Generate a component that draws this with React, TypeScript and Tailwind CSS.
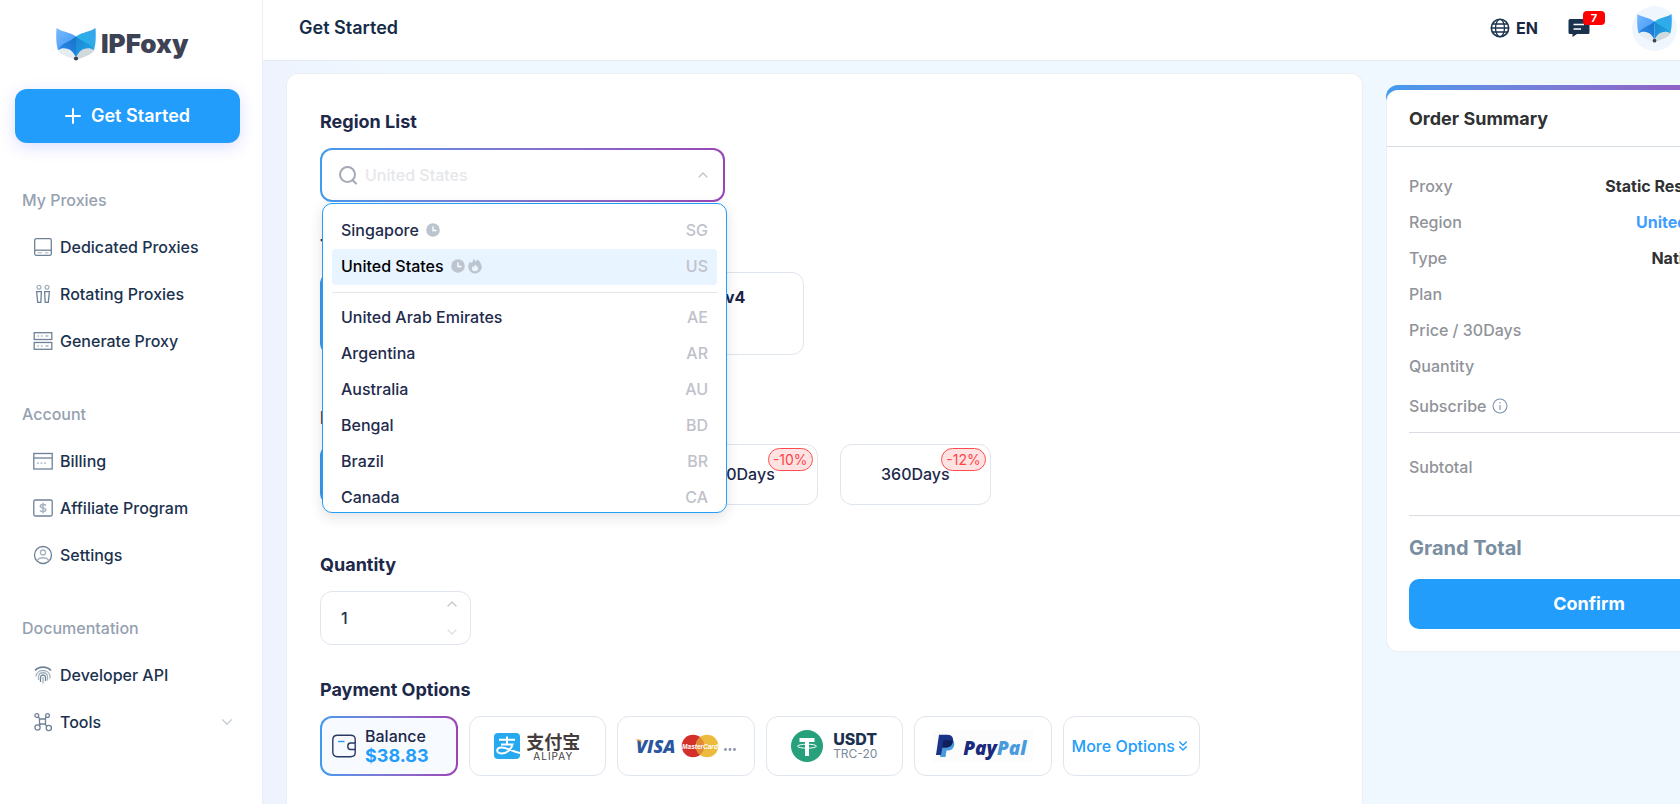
import { useState } from "react";
import type { ReactNode } from "react";
import { ChevronDown, ChevronUp, ChevronsDown } from "lucide-react";

const regions = [
  { name: 'United Arab Emirates', code: 'AE' },
  { name: 'Argentina', code: 'AR' },
  { name: 'Australia', code: 'AU' },
  { name: 'Bengal', code: 'BD' },
  { name: 'Brazil', code: 'BR' },
  { name: 'Canada', code: 'CA' },
]

const plans = [
  { name: '30Days', off: '' },
  { name: '90Days', off: '' },
  { name: '180Days', off: '-10%' },
  { name: '360Days', off: '-12%' },
]

const summary = [
  { label: 'Proxy', value: 'Static Residential', color: 'text-[#303133]' },
  { label: 'Region', value: 'United States', color: 'text-[#409eff]' },
  { label: 'Type', value: 'Native IPv4', color: 'text-[#303133]' },
  { label: 'Plan', value: '', color: '' },
  { label: 'Price / 30Days', value: '', color: '' },
  { label: 'Quantity', value: '', color: '' },
]

function FoxLogo({ className }: { className: string }) {
  return (
    <svg viewBox="0 0 40 34" className={className} aria-hidden="true">
      <defs>
        <linearGradient id="earLeft" x1="0" y1="0" x2="1" y2="1">
          <stop offset="0" stopColor="#7ab8ff" />
          <stop offset="1" stopColor="#3c97f2" />
        </linearGradient>
        <linearGradient id="earRight" x1="1" y1="0" x2="0" y2="1">
          <stop offset="0" stopColor="#3aa2ee" />
          <stop offset="1" stopColor="#1fb9e2" />
        </linearGradient>
        <linearGradient id="faceLeft" x1="0" y1="1" x2="1" y2="0">
          <stop offset="0" stopColor="#2f8ff0" />
          <stop offset="1" stopColor="#1672c8" />
        </linearGradient>
        <linearGradient id="faceRight" x1="0" y1="0" x2="1" y2="1">
          <stop offset="0" stopColor="#1a86d2" />
          <stop offset="1" stopColor="#22a8ea" />
        </linearGradient>
      </defs>
      <path d="M1.500 22C2 27 12 30 20 33C20 27 16 20 9 20Z" fill="#e4edf2" />
      <path d="M38.500 22C38 27 28 30 20 33C20 27 24 20 31 20Z" fill="#d0d9dc" />
      <path d="M0.500 1C6 5 14 5 20 9.500V12L2 23C0 17 0 8 0.500 1Z" fill="url(#earLeft)" />
      <path d="M39.500 1C34 5 26 5 20 9.500V12L38 23C40 17 40 8 39.500 1Z" fill="url(#earRight)" />
      <path d="M20 9.500C14 15 5 16 2 23C5 21 9 21 12 22C16 23 18 27 20 30Z" fill="url(#faceLeft)" />
      <path d="M20 9.500C26 15 35 16 38 23C35 21 31 21 28 22C24 23 22 27 20 30Z" fill="url(#faceRight)" />
      <circle cx="20" cy="31.500" r="2.100" fill="#3d4254" />
    </svg>
  )
}

function MenuIcon({ children }: { children: ReactNode }) {
  return (
    <svg viewBox="0 0 20 20" className="w-5 h-5 shrink-0" fill="none" stroke="#6f8196" strokeWidth="1.300" aria-hidden="true">
      {children}
    </svg>
  )
}

const menu = [
  {
    title: 'My Proxies',
    items: [
      {
        name: 'Dedicated Proxies',
        icon: <MenuIcon><rect x="1.700" y="1.700" width="16.600" height="16.600" rx="1.500" /><path d="M1.700 13.200H18.300" /><path d="M4.500 15.800H9M12 15.800H15.500" strokeWidth="1" stroke="#a6b2bf" /></MenuIcon>
      },
      {
        name: 'Rotating Proxies',
        icon: <MenuIcon><circle cx="6" cy="3.300" r="1.900" stroke="#a6b2bf" /><circle cx="14" cy="3.300" r="1.900" stroke="#a6b2bf" /><path d="M3.600 7.700H8.400L7.800 18.300H4.700ZM11.600 7.700H16.400L15.300 18.300H12.200Z" /></MenuIcon>
      },
      {
        name: 'Generate Proxy',
        icon: <MenuIcon><rect x="1.200" y="1.700" width="17.600" height="6.800" /><rect x="1.200" y="11.500" width="17.600" height="6.800" /><path d="M4.500 5H6M8 5H9.500M12.500 5H15.500M4.500 15H6M8 15H9.500M12.500 15H15.500" stroke="#a6b2bf" /></MenuIcon>
      },
    ]
  },
  {
    title: 'Account',
    items: [
      {
        name: 'Billing',
        icon: <MenuIcon><rect x="0.800" y="2.500" width="18.400" height="15.500" /><path d="M0.800 7H19.200" /><path d="M4 12.200H6M7.500 12.200H9.500M11 12.200H13" stroke="#a6b2bf" /></MenuIcon>
      },
      {
        name: 'Affiliate Program',
        icon: <MenuIcon><rect x="0.800" y="2" width="18.400" height="16" rx="1.500" /><path d="M13 7.500C12 6 7.300 6 7.300 8.300C7.300 10.700 12.900 9.300 12.900 11.800C12.900 14.200 8 14 7 12.400M10 4.800V15.200" strokeWidth="1.500" stroke="#a6b2bf" /></MenuIcon>
      },
      {
        name: 'Settings',
        icon: <MenuIcon><circle cx="10" cy="10" r="8.500" /><circle cx="10" cy="7.500" r="2.500" stroke="#a6b2bf" /><path d="M4.500 15.500C6 11.800 14 11.800 15.500 15.500" stroke="#a6b2bf" /></MenuIcon>
      },
    ]
  },
  {
    title: 'Documentation',
    items: [
      {
        name: 'Developer API',
        icon: <MenuIcon><path d="M2 5.500C6 1 14 1 18 5.500" strokeWidth="1.600" /><path d="M3 11.500C3.500 3.500 16.500 3.500 17 11.500V13.500M5.500 15V11.500C6 6.500 14 6.500 14.500 11.500V15.500" stroke="#a6b2bf" /><path d="M7.500 17V12C8 9.300 12 9.300 12.500 12V16" /><path d="M10 12V18.500" stroke="#a6b2bf" /></MenuIcon>
      },
      {
        name: 'Tools',
        icon: <MenuIcon><circle cx="3.800" cy="3.500" r="1.900" /><circle cx="14.500" cy="3.500" r="1.900" /><circle cx="4.500" cy="15.500" r="2.600" /><circle cx="15.800" cy="16" r="2.600" /><path d="M5 5L7 6.800M13.300 5L12 6.800M6.300 13.500L7.500 12.200M13.800 14L12 12.200M6.500 6.500V12.500M12.500 6.500V12.500M6.500 7H12.500M6.500 12H12.500" /></MenuIcon>
      },
    ]
  },
]

function ClockIcon() {
  return (
    <svg viewBox="0 0 14 14" className="w-3.5 h-3.5" aria-hidden="true">
      <circle cx="7" cy="7" r="6.800" fill="#bcc5cf" />
      <path d="M7 3.200V7.500H10.500" fill="none" stroke="#fff" strokeWidth="1.300" />
    </svg>
  )
}

function FireIcon() {
  return (
    <svg viewBox="0 0 14 16" className="w-3.5 h-4" aria-hidden="true">
      <path d="M5.500 0.500C6 2 7 2.500 8 3.500C8.700 3 9.200 2.200 9.300 1.200C12 3.500 13.800 6.200 13.800 9A6.800 6.500 0 0 1 0.200 9C0.200 6.800 1 5.200 2.200 3.800C2.600 4.500 3 4.900 3.600 5C4.800 4 5.300 2.500 5.500 0.500Z" fill="#bcc5cf" />
      <path d="M7 6.500C8.500 8 10.200 8.800 10.200 10.300A3.200 2.900 0 0 1 3.800 10.300C3.800 9.500 4.200 9 4.600 8.600C5.500 9 6.700 8.300 7 6.500Z" fill="#e8f4ff" />
    </svg>
  )
}

function SectionTitle({ children, className, htmlFor }: { children: ReactNode, className?: string, htmlFor?: string }) {
  return (
    <h2 className={`h-6 mb-3.5 text-lg leading-6 font-bold text-[#20284a] ${className ?? ''}`}>
      {htmlFor ? <label htmlFor={htmlFor}>{children}</label> : children}
    </h2>
  )
}

function Sidebar() {
  return (
    <aside className="w-[263px] shrink-0 bg-white border-r border-[#ebeef2] pl-[15px] pr-[22px] pt-[26px]">
      <a href="#" className="flex items-center gap-[5px] ml-[41px] h-9">
        <FoxLogo className="w-10 h-[34px]" />
        <span className="text-[26px] leading-9 font-black text-[#3d4254]">IPFoxy</span>
      </a>

      <button className="mt-[27px] w-full h-[54px] rounded-xl bg-[#229dfc] text-white text-lg font-semibold flex items-center justify-center gap-2.5 shadow-[0_4px_16px_rgba(90,100,255,0.22)]">
        <svg viewBox="0 0 16 16" className="w-4 h-4" stroke="#fff" strokeWidth="2" strokeLinecap="round" aria-hidden="true">
          <path d="M1 8H15M8 1V15" />
        </svg>
        Get Started
      </button>

      <nav className="mt-[45px] flex flex-col gap-[37px]">
        {
          menu.map(group => (
            <div key={group.title}>
              <h3 className="mb-3 px-[7px] text-base leading-6 font-medium text-[#95a1b0]">{group.title}</h3>
              {
                group.items.map(item => (
                  <a key={item.name} href="#" className="h-[47px] pl-[18px] pb-px flex items-center gap-[7px] text-base font-medium text-[#1b324f]">
                    {item.icon}
                    <span className="flex-1">{item.name}</span>
                    {item.name == 'Tools' && <ChevronDown className="mr-1 w-[18px] h-[18px] text-[#c9d1d8]" />}
                  </a>
                ))
              }
            </div>
          ))
        }
      </nav>
    </aside>
  )
}

function Header() {
  return (
    <header className="h-[61px] shrink-0 bg-white border-b border-[#e8ebef] flex items-center justify-between pl-9 pr-[3px] pb-1">
      <h1 className="text-lg font-semibold text-[#152c48]">Get Started</h1>
      <div className="flex items-center">
        <button className="flex items-center gap-1.5 text-base font-bold text-[#1b2845]">
          <svg viewBox="0 0 20 20" className="w-5 h-5" fill="none" stroke="#1b324f" strokeWidth="1.300" aria-hidden="true">
            <circle cx="10" cy="10" r="8.700" strokeWidth="1.600" />
            <ellipse cx="10" cy="10" rx="4.500" ry="8.700" />
            <path d="M2.500 6H17.500M2.500 14H17.500M1.300 10H18.700" />
          </svg>
          EN
        </button>
        <button className="relative ml-[30px] w-[22px] h-5" aria-label="Messages">
          <svg viewBox="0 0 22 20" className="w-[22px] h-5" aria-hidden="true">
            <path d="M2 1H20A1.500 1.500 0 0 1 21.500 2.500V14.500A1.500 1.500 0 0 1 20 16H9L4.500 19V16H2A1.500 1.500 0 0 1 0.500 14.500V2.500A1.500 1.500 0 0 1 2 1Z" fill="#1b324f" />
            <path d="M5.500 6.500H16M5.500 11H13" stroke="#fff" strokeWidth="1.500" />
          </svg>
          <span className="absolute left-[15px] -top-[7px] w-[22px] h-3.5 rounded bg-[#ff0000] text-white text-[11px] leading-3.5 font-bold text-center">7</span>
        </button>
        <a href="#" aria-label="Profile" className="ml-[42px] w-[45px] h-[45px] rounded-full bg-[#f0f6fe] flex items-center justify-center">
          <FoxLogo className="w-[35px] h-[30px]" />
        </a>
      </div>
    </header>
  )
}

function RegionSelect() {
  return (
    <div className="relative w-[405px]">
      <div className="h-[54px] p-0.5 rounded-xl bg-linear-to-r from-[#409bee] to-[#9b45b5]">
        <div className="h-full rounded-[10px] bg-white flex items-center pl-4 pr-3">
          <svg viewBox="0 0 20 20" className="w-5 h-5 shrink-0" fill="none" stroke="#a5a9b6" strokeWidth="2" strokeLinecap="round" aria-hidden="true">
            <circle cx="9.500" cy="9.500" r="7.500" />
            <path d="M15 15.500L18 18.500" />
          </svg>
          <input id="region" placeholder="United States" className="ml-[7px] flex-1 min-w-0 outline-none bg-transparent text-base font-medium placeholder:text-[#e6e7eb]" />
          <ChevronUp className="w-4 h-4 text-[#c0c4cc]" />
        </div>
      </div>

      <ul role="listbox" aria-label="Region List" className="absolute z-10 left-0.5 top-[55px] w-[405px] h-[310px] overflow-hidden rounded-[10px] border border-[#229dfc] bg-white px-[9px] pt-[9px] text-base font-medium text-[#232b4d] shadow-[0_4px_14px_rgba(0,0,0,0.12)]">
        <li role="option" aria-selected="false" className="h-9 px-[9px] pb-0.5 flex items-center">
          <span className="mr-[7px]">Singapore</span>
          <ClockIcon />
          <span className="ml-auto text-[#bfc2ca]">SG</span>
        </li>
        <li role="option" aria-selected="true" className="h-9 px-[9px] pb-0.5 flex items-center rounded bg-[#e8f4ff] text-black">
          <span className="mr-[7px]">United States</span>
          <ClockIcon />
          <span className="ml-[3px]"><FireIcon /></span>
          <span className="ml-auto text-[#bfc2ca]">US</span>
        </li>
        <li role="separator" className="my-[7px] border-t border-[#e4e6ea]"></li>
        {
          regions.map(region => (
            <li key={region.code} role="option" aria-selected="false" className="h-9 px-[9px] pb-0.5 flex items-center justify-between">
              <span>{region.name}</span>
              <span className="text-[#bfc2ca]">{region.code}</span>
            </li>
          ))
        }
      </ul>
    </div>
  )
}

function PaymentOptions() {

  const card = "h-[60px] rounded-xl border border-[#dfe5ec] bg-white flex items-center justify-center"

  return (
    <div className="grid grid-cols-6 gap-[11px] w-[880px]">
      <button className="h-[60px] p-0.5 rounded-xl bg-linear-to-r from-[#409bee] to-[#9b45b5]">
        <span className="h-full rounded-[10px] bg-[#f7faff] flex items-center pl-2.5 gap-[9px]">
          <svg viewBox="0 0 24 24" className="w-6 h-6" fill="none" stroke="#2b3a63" strokeWidth="1.400" aria-hidden="true">
            <path d="M23.200 9V5.500Q23.200 1.300 18.500 1.300H5.500Q0.800 1.300 0.800 6V18Q0.800 22.700 5.500 22.700H18.500Q23.200 22.700 23.200 18.500V15.500" />
            <path d="M23.200 9H18.500Q15.800 9 15.800 12.200T18.500 15.500H23.200Z" />
            <path d="M6 7.500H12.500" stroke="#229dfc" />
          </svg>
          <span className="text-left">
            <span className="block text-base leading-5 font-medium text-[#20284a]">Balance</span>
            <span className="block text-lg leading-5 font-bold text-[#229dfc]">$38.83</span>
          </span>
        </span>
      </button>

      <button className={card}>
        <svg viewBox="0 0 26 26" className="w-[26px] h-[26px] mr-1.5" aria-hidden="true">
          <rect width="26" height="26" rx="4" fill="#27a9f0" />
          <path d="M13 3.500V11.500M5 6.800H21M7 11.500H18.500C17.500 16 13 20.500 7.500 20.500C1.500 20.500 2 14.500 7.500 14.500C13 14.500 17 18 26 20" fill="none" stroke="#fff" strokeWidth="2" />
        </svg>
        <span className="flex flex-col items-center text-[#453d3c]">
          <span className="text-[18px] leading-[19px] font-bold font-['Noto_Sans_CJK_SC',sans-serif]">支付宝</span>
          <span className="text-[10px] leading-[10px] tracking-widest">ALIPAY</span>
        </span>
      </button>

      <button className={card}>
        <svg viewBox="0 0 42 24" className="w-[42px] h-6" aria-hidden="true">
          <text x="1" y="18.500" fontSize="18" fontWeight="800" fontStyle="italic" fill="#2a56a0" fontFamily="Open Sans, sans-serif">VISA</text>
          <path d="M0 5.500H5.500L7.500 10C5.500 7.500 3 6.200 0 5.500Z" fill="#e9a33b" />
        </svg>
        <svg viewBox="0 0 38 24" className="ml-1 w-[38px] h-6" aria-hidden="true">
          <circle cx="12" cy="12" r="11.300" fill="#d4302a" />
          <circle cx="26" cy="12" r="11.300" fill="#ecbb3d" />
          <path d="M19 3.200A11.300 11.300 0 0 1 19 20.800A11.300 11.300 0 0 1 19 3.200Z" fill="#e08a35" />
          <text x="19" y="14.500" textAnchor="middle" fontSize="6.500" fontWeight="700" fontStyle="italic" fill="#fff" fontFamily="Liberation Sans, sans-serif">MasterCard</text>
        </svg>
        <svg viewBox="0 0 14 24" className="ml-1 w-3.5 h-6" fill="#8796a8" aria-hidden="true">
          <circle cx="2.500" cy="15.500" r="1.400" />
          <circle cx="7" cy="15.500" r="1.400" />
          <circle cx="11.500" cy="15.500" r="1.400" />
        </svg>
      </button>

      <button className={card}>
        <svg viewBox="0 0 32 32" className="w-8 h-8 mr-2.5" aria-hidden="true">
          <circle cx="16" cy="16" r="16" fill="#26a17b" />
          <path d="M8.500 8H23.500V12H18V26H14V12H8.500Z" fill="#fff" />
          <ellipse cx="16" cy="16.200" rx="9.500" ry="2" fill="none" stroke="#fff" strokeWidth="1" />
        </svg>
        <span className="flex flex-col items-start">
          <span className="text-base leading-4 font-extrabold text-[#1b324f]">USDT</span>
          <span className="text-xs leading-[14px] text-[#7b8a9c]">TRC-20</span>
        </span>
      </button>

      <button className={card}>
        <span className="w-[101px] h-8 bg-[#fcfcfc] flex items-center pl-1 gap-2">
          <svg viewBox="0 0 19 24" className="w-[19px] h-6 shrink-0" aria-hidden="true">
            <path d="M8 6H17C19.500 9 18.500 16 12.500 16.500H10.500L9.500 23H4Z" fill="#4a9ade" />
            <path d="M3 0.800H11.500C16 0.800 18 4 16.700 8.500C15.700 12.500 12.500 13.500 9 13.500H6.500L5 21H0Z" fill="#1a3288" />
            <path d="M7.500 6.200H16.900C16.500 11.500 13.500 13.500 9 13.500H6.300Z" fill="#101e5c" />
          </svg>
          <span className="pt-1 text-[19px] leading-6 font-extrabold italic text-[#1a2a7c] font-['Open_Sans',sans-serif]">Pay<span className="text-[#4a9ade]">Pal</span></span>
        </span>
      </button>

      <button className={`${card} text-base font-medium text-[#229dfc] whitespace-nowrap`}>
        More Options
        <ChevronsDown className="w-4 h-4" strokeWidth={2} />
      </button>
    </div>
  )
}

function OrderSummary() {
  return (
    <section className="mt-3 w-[406px] shrink-0 self-start rounded-t-xl rounded-b-3xl bg-linear-to-r from-[#409bee] to-[#9b45b5] pt-[5px]">
      <div className="rounded-xl bg-white border border-t-0 border-[#ebeef2]">
        <h2 className="h-[57px] px-[22px] pt-0.5 flex items-center border-b border-[#d5dce3] text-lg font-bold text-[#303133]">Order Summary</h2>

        <div className="px-[22px] pt-[21px] pb-[22px] text-base font-medium text-[#909399]">
          {
            summary.map(row => (
              <div key={row.label} className="h-9 flex items-center justify-between">
                <span>{row.label}</span>
                <span className={`mr-7 font-bold ${row.color}`}>{row.value}</span>
              </div>
            ))
          }
          <div className="h-11 flex items-center gap-1.5">
            Subscribe
            <svg viewBox="0 0 16 16" className="w-4 h-4" fill="none" stroke="#7f93a8" strokeWidth="1.100" aria-hidden="true">
              <circle cx="8" cy="8" r="7" />
              <path d="M8 4V5.500M8 7V12" />
            </svg>
          </div>
          <div className="mt-1 h-[84px] pt-[18px] pb-8 border-y border-[#d8dce3] leading-8">Subtotal</div>
          <div className="h-[63px] flex items-center text-xl font-bold text-[#7a8ea2]">Grand Total</div>
          <button className="w-full h-[50px] rounded-[10px] bg-[#229dfc] text-white text-lg font-bold">Confirm</button>
        </div>
      </div>
    </section>
  )
}

export default function App() {

  const [quantity, setQuantity] = useState(1)

  return (
    <div className="h-screen overflow-hidden flex bg-white font-['Inter',sans-serif]">
      <Sidebar />

      <div className="flex-1 min-w-0 flex flex-col">
        <Header />

        <main className="flex-1 min-h-0 overflow-hidden flex gap-[23px] pl-[23px] pt-3 bg-linear-to-r from-[#eef3fe] to-[#f0f8ff] to-10%">

          <div className="min-w-[1077px] flex-1 rounded-t-xl border border-b-0 border-[#ebeef2] bg-white px-[33px] pt-9">
            <SectionTitle htmlFor="region">Region List</SectionTitle>
            <RegionSelect />

            <SectionTitle className="mt-8">Type</SectionTitle>
            <div className="flex gap-6 text-base font-bold text-[#1b2345]">
              <button className="w-[230px] h-[83px] pb-8 rounded-xl border-2 border-[#3a98ee] bg-[#f7faff]">Native IPv4</button>
              <button className="w-[230px] h-[83px] pr-1.5 pb-[34px] rounded-xl border border-[#dfe5ec]">Broadcast IPv4</button>
            </div>

            <SectionTitle className="mt-[51px]">Plan</SectionTitle>
            <div className="grid grid-cols-4 gap-[22px] w-[671px]">
              {
                plans.map((plan, index) => (
                  <button
                    key={plan.name}
                    className={`relative h-[61px] pb-0.5 rounded-xl text-base font-medium text-[#20284a] ${index == 0 ? 'border-2 border-[#3a98ee]' : 'border border-[#dfe5ec]'}`}
                  >
                    {plan.name}
                    {
                      plan.off && <span className="absolute top-[3px] right-1 w-[45px] h-[23px] rounded-full border border-[#ff4d4f] bg-[#ffe3e3] text-sm leading-[21px] font-normal text-[#ff4347]">{plan.off}</span>
                    }
                  </button>
                ))
              }
            </div>

            <SectionTitle className="mt-12" htmlFor="quantity">Quantity</SectionTitle>
            <div className="w-[151px] h-[54px] rounded-xl border border-[#dfe5ec] flex items-center pl-5 pr-2.5">
              <input
                id="quantity"
                value={quantity}
                onChange={e => setQuantity(Number(e.target.value) || 1)}
                className="flex-1 min-w-0 outline-none text-base font-medium text-[#1b324f]"
              />
              <div className="h-full flex flex-col justify-between py-1">
                <button aria-label="Increase" onClick={() => setQuantity(quantity + 1)}>
                  <ChevronUp className="w-4 h-4 text-[#c4c7cd]" />
                </button>
                <button aria-label="Decrease" onClick={() => setQuantity(Math.max(1, quantity - 1))}>
                  <ChevronDown className="w-4 h-4 text-[#dfe1e5]" />
                </button>
              </div>
            </div>

            <SectionTitle className="mt-[33px]">Payment Options</SectionTitle>
            <PaymentOptions />
          </div>

          <OrderSummary />
        </main>
      </div>
    </div>
  )
}
